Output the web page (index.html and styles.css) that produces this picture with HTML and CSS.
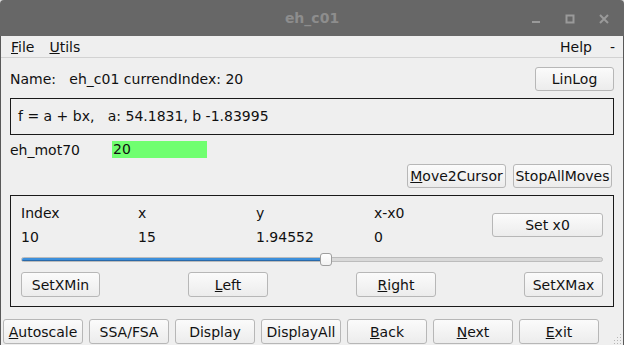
FILE: index.html
```html
<!DOCTYPE html>
<html>
<head>
<meta charset="utf-8">
<link rel="stylesheet" href="styles.css">
</head>
<body>
<div class="window">
  <div class="titlebar">
    <div></div>
    <div class="title">eh_c01</div>
    <div class="controls">
      <svg class="ctl" width="10" height="10" viewBox="0 0 10 10"><rect x="1" y="7" width="8" height="2" fill="#9a9a9a"/></svg>
      <svg class="ctl" width="10" height="10" viewBox="0 0 10 10"><rect x="1.5" y="1.5" width="7" height="7" fill="none" stroke="#9a9a9a" stroke-width="2"/></svg>
      <svg class="ctl" width="10" height="10" viewBox="0 0 10 10"><path d="M1 1 L9 9 M9 1 L1 9" stroke="#9a9a9a" stroke-width="2"/></svg>
    </div>
  </div>
  <div class="body">
    <div class="menubar">
      <span class="menu"><u>F</u>ile</span>
      <span class="menu"><u>U</u>tils</span>
      <span class="spacer"></span>
      <span class="menu">Help</span>
      <span class="menu dash">-</span>
    </div>
    <div class="content">
      <div class="namerow">
        <span class="label">Name:&nbsp;&nbsp;&nbsp;eh_c01 currendIndex: 20</span>
        <button class="btn linlog">LinLog</button>
      </div>
      <div class="fitbox">f = a + bx,&nbsp;&nbsp;&nbsp;a: 54.1831, b -1.83995</div>
      <div class="motrow">
        <span class="motname">eh_mot70</span>
        <span class="motval">20</span>
      </div>
      <div class="moverow">
        <button class="btn wide"><u>M</u>ove2Cursor</button>
        <button class="btn wide">StopAllMoves</button>
      </div>
      <div class="cursorbox">
        <div class="inforow">
          <div class="infogrid">
            <span>Index</span><span>x</span><span>y</span><span>x-x0</span>
            <span>10</span><span>15</span><span>1.94552</span><span>0</span>
          </div>
          <button class="btn setx0">Set x0</button>
        </div>
        <div class="slider">
          <div class="groove"><div class="fill" style="width:306px"></div></div>
          <div class="handle" style="left:299px"></div>
        </div>
        <div class="navrow">
          <button class="btn nav n1">SetXMin</button>
          <button class="btn nav"><u>L</u>eft</button>
          <button class="btn nav"><u>R</u>ight</button>
          <button class="btn nav n1">SetXMax</button>
        </div>
      </div>
    </div>
    <div class="bottomrow">
      <button class="btn bot"><u>A</u>utoscale</button>
      <button class="btn bot">SSA/FSA</button>
      <button class="btn bot">Display</button>
      <button class="btn bot">DisplayAll</button>
      <button class="btn bot"><u>B</u>ack</button>
      <button class="btn bot"><u>N</u>ext</button>
      <button class="btn bot"><u>E</u>xit</button>
    </div>
    <svg class="grip" width="10" height="12" viewBox="0 0 10 12">
      <rect x="8" y="2" width="1" height="1" fill="#b5b5b5"/>
      <rect x="5" y="5" width="1" height="1" fill="#b5b5b5"/>
      <rect x="8" y="5" width="1" height="1" fill="#b5b5b5"/>
      <rect x="2" y="8" width="1" height="1" fill="#b5b5b5"/>
      <rect x="5" y="8" width="1" height="1" fill="#b5b5b5"/>
      <rect x="8" y="8" width="1" height="1" fill="#b5b5b5"/>
      <rect x="2" y="11" width="1" height="1" fill="#b5b5b5"/>
      <rect x="5" y="11" width="1" height="1" fill="#b5b5b5"/>
      <rect x="8" y="11" width="1" height="1" fill="#b5b5b5"/>
    </svg>
  </div>
</div>
</body>
</html>
```
FILE: styles.css
```css
html, body {
  margin: 0;
  padding: 0;
  background: #d9d9d9;
}
.window {
  width: 624px;
  height: 345px;
  overflow: hidden;
  font-family: "DejaVu Sans", "Liberation Sans", sans-serif;
  font-size: 14px;
  color: #111;
  display: flex;
  flex-direction: column;
}
.titlebar {
  height: 36px;
  flex: none;
  background: #676767;
  border-radius: 4px 4px 0 0;
  display: grid;
  grid-template-columns: 1fr auto 1fr;
  align-items: center;
}
.title {
  font-weight: bold;
  font-size: 14px;
  color: #8d8d8d;
  padding-bottom: 1px;
}
.controls {
  display: flex;
  justify-content: flex-end;
  align-items: center;
  gap: 24px;
  padding-right: 15px;
  padding-top: 2px;
}
.body {
  position: relative;
  flex: 1;
  background: #efefef;
  border-left: 1px solid #595959;
  border-right: 1px solid #595959;
}
.menubar {
  height: 21px;
  border-bottom: 1px solid #d2d2d2;
  display: flex;
  align-items: center;
  padding-left: 10px;
  padding-right: 8px;
}
.menu {
  margin-right: 15px;
  line-height: 16px;
}
.menu.dash {
  margin-right: 0;
  margin-left: 6px;
}
.menu:nth-last-child(2) {
  margin-right: 12px;
}
.spacer {
  flex: 1;
}
.content {
  padding: 0 9px 0 9px;
}
.btn {
  font-family: inherit;
  font-size: 14px;
  color: #111;
  background: linear-gradient(#fbfbfb, #ececec);
  border: 1px solid #b7b7b7;
  border-radius: 3px;
  padding: 0;
  height: 25px;
  line-height: 22px;
  box-sizing: border-box;
  margin: 0;
}
.namerow {
  margin-top: 9px;
  height: 24px;
  display: flex;
  align-items: center;
  justify-content: space-between;
}
.namerow .label {
  padding-bottom: 1px;
}
.linlog {
  width: 79px;
  height: 24px;
}
.fitbox {
  margin-top: 7px;
  height: 37px;
  box-sizing: border-box;
  border: 1px solid #1a1a1a;
  display: flex;
  align-items: center;
  padding-left: 7px;
  padding-bottom: 1px;
}
.motrow {
  margin-top: 6px;
  height: 17px;
  display: flex;
  align-items: center;
}
.motname {
  width: 102px;
}
.motval {
  background: #70ff70;
  width: 94px;
  height: 17px;
  line-height: 17px;
  padding-left: 1px;
}
.moverow {
  margin-top: 6px;
  display: flex;
  justify-content: flex-end;
  gap: 7px;
  padding-right: 2px;
}
.wide {
  width: 99px;
  height: 24px;
}
.cursorbox {
  margin-top: 7px;
  height: 112px;
  box-sizing: border-box;
  border: 1px solid #1a1a1a;
  padding: 9px 10px 9px 10px;
  display: flex;
  flex-direction: column;
}
.inforow {
  display: flex;
  align-items: center;
  justify-content: space-between;
  height: 40px;
}
.infogrid {
  display: grid;
  grid-template-columns: 117px 118px 118px 100px;
  grid-template-rows: 16px 16px;
  row-gap: 8px;
  line-height: 16px;
}
.setx0 {
  width: 111px;
  height: 24px;
  margin-top: -1px;
}
.slider {
  position: relative;
  margin-top: 8px;
  height: 13px;
  display: flex;
  align-items: center;
}
.groove {
  flex: 1;
  height: 5px;
  box-sizing: border-box;
  background: #d9d9d9;
  border: 1px solid #bcbcbc;
  border-radius: 3px;
  overflow: hidden;
}
.fill {
  height: 100%;
  background: #3d8fdb;
  box-shadow: inset 0 -1px 0 #2a69a8;
}
.handle {
  position: absolute;
  top: 0;
  width: 12px;
  height: 13px;
  box-sizing: border-box;
  background: linear-gradient(#ffffff, #f2f2f2);
  border: 1px solid #9e9e9e;
  border-radius: 3px;
}
.navrow {
  margin-top: 6px;
  display: flex;
  justify-content: space-between;
}
.nav {
  width: 80px;
}
.nav.n1 {
  width: 79px;
}
.bottomrow {
  margin-top: 12px;
  padding-left: 2px;
  display: flex;
  gap: 6px;
}
.bot {
  width: 80px;
  height: 25px;
}
.grip {
  position: absolute;
  right: 1px;
  bottom: 1px;
}
```
